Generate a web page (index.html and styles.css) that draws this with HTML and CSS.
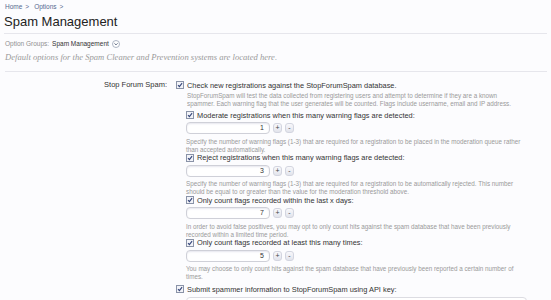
FILE: index.html
```html
<!DOCTYPE html>
<html>
<head>
<meta charset="utf-8">
<link rel="stylesheet" href="styles.css">
</head>
<body>
<div class="page">
  <div class="crumbs"><span class="crumb">Home</span><span class="arr">&gt;</span><span class="crumb">Options</span><span class="arr">&gt;</span></div>
  <h1 class="title">Spam Management</h1>
  <div class="groups">Option Groups: <span class="cur">Spam Management</span>
    <svg class="menu-ico" width="8" height="8" viewBox="0 0 8 8"><circle cx="4" cy="4" r="3.5" fill="#fff" stroke="#9aa3b5" stroke-width="0.8"/><path d="M2.4 3.3 L4 4.9 L5.6 3.3" fill="none" stroke="#55607a" stroke-width="0.9"/></svg>
  </div>
  <p class="desc">Default options for the Spam Cleaner and Prevention systems are located here.</p>

  <div class="form">
    <div class="row">
      <div class="label">Stop Forum Spam:</div>
      <div class="ctrl">
        <div class="check top">
          <svg class="cb" width="8" height="8" viewBox="0 0 8 8"><rect x="0.5" y="0.5" width="7" height="7" fill="#f2f3f8" stroke="#8a93a8"/><path d="M2 4.2 L3.4 5.7 L6.1 2.1" fill="none" stroke="#35467a" stroke-width="1.1"/></svg>
          <span class="lbl">Check new registrations against the StopForumSpam database.</span>
        </div>
        <div class="explain">StopForumSpam will test the data collected from registering users and attempt to determine if they are a known spammer. Each warning flag that the user generates will be counted. Flags include username, email and IP address.</div>

        <div class="sub">
          <div class="check">
            <svg class="cb" width="8" height="8" viewBox="0 0 8 8"><rect x="0.5" y="0.5" width="7" height="7" fill="#f2f3f8" stroke="#8a93a8"/><path d="M2 4.2 L3.4 5.7 L6.1 2.1" fill="none" stroke="#35467a" stroke-width="1.1"/></svg>
            <span class="lbl">Moderate registrations when this many warning flags are detected:</span>
          </div>
          <div class="spin"><span class="num">1</span><span class="btn">+</span><span class="btn">-</span></div>
          <div class="explain">Specify the number of warning flags (1-3) that are required for a registration to be placed in the moderation queue rather than accepted automatically.</div>

          <div class="check">
            <svg class="cb" width="8" height="8" viewBox="0 0 8 8"><rect x="0.5" y="0.5" width="7" height="7" fill="#f2f3f8" stroke="#8a93a8"/><path d="M2 4.2 L3.4 5.7 L6.1 2.1" fill="none" stroke="#35467a" stroke-width="1.1"/></svg>
            <span class="lbl">Reject registrations when this many warning flags are detected:</span>
          </div>
          <div class="spin"><span class="num">3</span><span class="btn">+</span><span class="btn">-</span></div>
          <div class="explain">Specify the number of warning flags (1-3) that are required for a registration to be automatically rejected. This number should be equal to or greater than the value for the moderation threshold above.</div>

          <div class="check">
            <svg class="cb" width="8" height="8" viewBox="0 0 8 8"><rect x="0.5" y="0.5" width="7" height="7" fill="#f2f3f8" stroke="#8a93a8"/><path d="M2 4.2 L3.4 5.7 L6.1 2.1" fill="none" stroke="#35467a" stroke-width="1.1"/></svg>
            <span class="lbl">Only count flags recorded within the last x days:</span>
          </div>
          <div class="spin"><span class="num">7</span><span class="btn">+</span><span class="btn">-</span></div>
          <div class="explain">In order to avoid false positives, you may opt to only count hits against the spam database that have been previously recorded within a limited time period.</div>

          <div class="check">
            <svg class="cb" width="8" height="8" viewBox="0 0 8 8"><rect x="0.5" y="0.5" width="7" height="7" fill="#f2f3f8" stroke="#8a93a8"/><path d="M2 4.2 L3.4 5.7 L6.1 2.1" fill="none" stroke="#35467a" stroke-width="1.1"/></svg>
            <span class="lbl">Only count flags recorded at least this many times:</span>
          </div>
          <div class="spin"><span class="num">5</span><span class="btn">+</span><span class="btn">-</span></div>
          <div class="explain">You may choose to only count hits against the spam database that have previously been reported a certain number of times.</div>
        </div>

        <div class="check top last">
          <svg class="cb" width="8" height="8" viewBox="0 0 8 8"><rect x="0.5" y="0.5" width="7" height="7" fill="#f2f3f8" stroke="#8a93a8"/><path d="M2 4.2 L3.4 5.7 L6.1 2.1" fill="none" stroke="#35467a" stroke-width="1.1"/></svg>
          <span class="lbl">Submit spammer information to StopForumSpam using API key:</span>
        </div>
        <div class="sub"><div class="apikey"></div></div>
      </div>
    </div>
  </div>
</div>
</body>
</html>
```

FILE: styles.css
```css
html, body {
  margin: 0;
  padding: 0;
  background: #fcfcfe;
}
body {
  font-family: "Liberation Sans", Arial, sans-serif;
  color: #333;
  overflow: hidden;
}
.page {
  padding: 0 4px 0 5px;
}
.crumbs {
  font-size: 6.5px;
  line-height: 8px;
  padding-top: 3px;
}
.crumb {
  color: #56698f;
}
.arr {
  margin: 0 5px 0 3px;
  color: #56698f;
}
.title {
  margin: 0 0 0 -1px;
  font-family: "Liberation Sans", Arial, sans-serif;
  font-weight: normal;
  font-size: 13px;
  line-height: 21px;
  color: #222;
  padding: 0 0 1px 0;
  border-bottom: 1px solid #e6e6ec;
}
.groups {
  font-size: 6.5px;
  line-height: 9px;
  margin-top: 5px;
  color: #909090;
  display: flex;
  align-items: center;
  gap: 3px;
}
.groups .cur {
  color: #333;
}
.desc {
  margin: 4px 0 0 0;
  font-family: "Liberation Serif", "Times New Roman", serif;
  font-style: italic;
  font-size: 8.6px;
  line-height: 10px;
  color: #9a9a9a;
  padding-bottom: 9px;
  border-bottom: 1px solid #e6e6ec;
}
.form {
  padding-top: 8px;
}
.row {
  display: flex;
}
.label {
  width: 162px;
  text-align: right;
  font-size: 7.5px;
  line-height: 10px;
  color: #333;
  padding-right: 5px;
}
.ctrl {
  width: 350px;
  padding-left: 4px;
}
.check {
  display: flex;
  align-items: center;
  height: 8px;
  gap: 3px;
  font-size: 7.4px;
  white-space: nowrap;
}
.check.top {
  height: 10px;
}
.check.last {
  margin-top: 3px;
}
.cb {
  flex: none;
}
.lbl {
  color: #333;
}
.explain {
  font-size: 6.3px;
  line-height: 8px;
  color: #9a9a9a;
  margin-left: 11px;
  margin-top: 2px;
}
.sub {
  margin-left: 10px;
  margin-top: 3px;
}
.sub .explain {
  margin-left: 0;
  margin-top: 3.5px;
}
.spin {
  display: flex;
  align-items: center;
  gap: 3px;
  margin-top: 3px;
}
.num {
  box-sizing: border-box;
  width: 84px;
  height: 12px;
  border: 1px solid #cfd0d8;
  border-radius: 4px;
  background: #fff;
  box-shadow: inset 0 1px 2px #e6e6ee;
  text-align: right;
  font-size: 7px;
  line-height: 10px;
  padding-right: 5px;
  color: #333;
}
.btn {
  box-sizing: border-box;
  width: 9px;
  height: 10px;
  border: 1px solid #d3d5e0;
  border-radius: 3px;
  background: linear-gradient(#f8f8fb, #e2e4ec);
  font-size: 7px;
  line-height: 8px;
  text-align: center;
  color: #444;
}
.apikey {
  margin-top: 2px;
  width: 339px;
  height: 8px;
  border: 1px solid #dcdce2;
  border-radius: 4px;
  background: #fff;
}
```
